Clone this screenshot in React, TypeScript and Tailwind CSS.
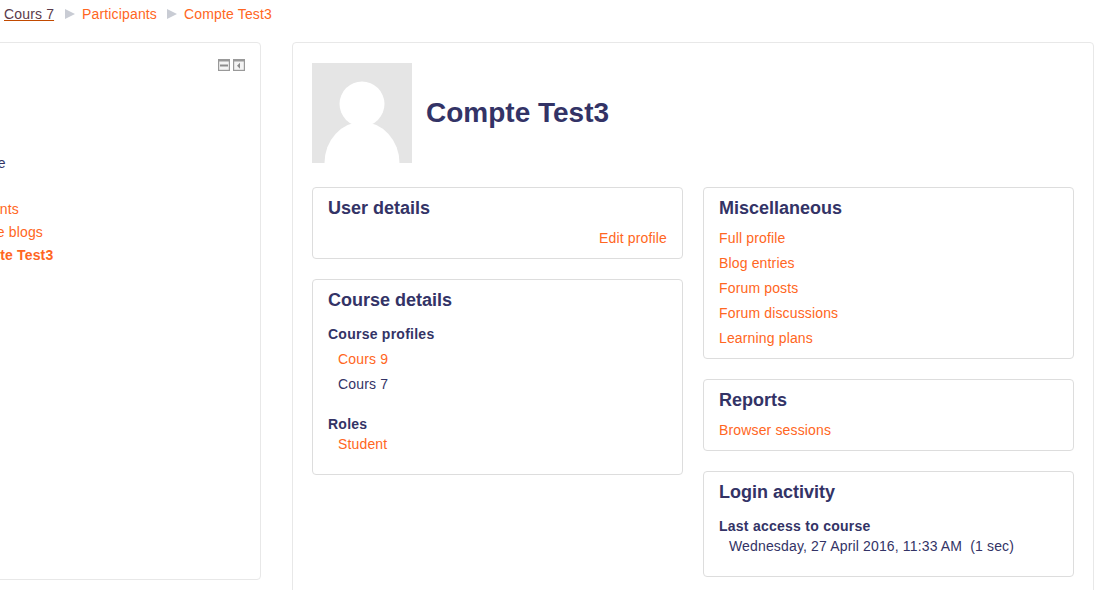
const ink = 'text-[#333366]';
const link = 'text-[#ff6622]';
const label = 'h-[20px] leading-[20px] font-bold tracking-[0.25px]';

function Card({ title, children }: { title: string; children: React.ReactNode }) {
    return (
        <section className="rounded-[4px] border border-[#ddd] px-[15px] pt-[9px] pb-[7px]">
            <h3 className="h-[22px] text-[18px] leading-[22px] font-bold tracking-normal">{title}</h3>
            <div className="mt-[7px] flow-root">{children}</div>
        </section>
    );
}

function LinkRow({ children }: { children: React.ReactNode }) {
    return <a className={`block h-[25px] leading-[25px] ${link}`}>{children}</a>;
}

function Separator({ left }: { left: string }) {
    return (
        <svg width="10" height="10" viewBox="0 0 10 10" className={`mr-[7px] shrink-0 ${left}`}>
            <path d="M0 0 L10 5 L0 10 Z" fill="#c9ccd4" />
        </svg>
    );
}

function WindowIcons() {
    return (
        <div className="flex justify-end gap-[3px] pr-[15px]">
            <svg width="12" height="12" viewBox="0 0 12 12">
                <rect x="0.6" y="0.6" width="10.8" height="10.8" fill="#f4f4f4" stroke="#999" strokeWidth="1.2" />
                <rect x="0" y="0" width="12" height="2.5" fill="#999" />
                <rect x="2" y="5.5" width="8" height="2" fill="#8c8c8c" />
            </svg>
            <svg width="12" height="12" viewBox="0 0 12 12">
                <rect x="0.6" y="0.6" width="10.8" height="10.8" fill="#f4f4f4" stroke="#999" strokeWidth="1.2" />
                <rect x="0" y="0" width="12" height="2.5" fill="#999" />
                <path d="M7 3.8 L4 6.8 L7 9.8 Z" fill="#8c8c8c" />
            </svg>
        </div>
    );
}

function Sidebar() {
    return (
        <aside className="ml-[-60px] h-[538px] w-[321px] shrink-0 rounded-[4px] border border-[#e8e8e8] pt-[16px]">
            <WindowIcons />
            <ul className="mt-[81px] leading-[23px] whitespace-nowrap">
                <li className="pl-[24px]">Profile</li>
                <li className="pl-[4px]">Cours 7</li>
                <li className={`pl-[3px] ${link}`}>Participants</li>
                <li className={`pl-[39px] ${link}`}>Site blogs</li>
                <li className={`pl-[19px] font-bold ${link}`}>Compte Test3</li>
            </ul>
        </aside>
    );
}

export default function App() {
    return (
        <div className={`h-[590px] w-[1110px] overflow-hidden bg-white font-['Liberation_Sans',Arial,sans-serif] text-[14px] tracking-[0.15px] ${ink}`}>
            <nav className="flex h-[28px] items-center whitespace-nowrap pl-[4px]">
                <a className="text-[#5b3a4a] underline decoration-[#c24a00]">Cours 7</a>
                <Separator left="ml-[11px]" />
                <a className={link}>Participants</a>
                <Separator left="ml-[10px]" />
                <a className={link}>Compte Test3</a>
            </nav>

            <div className="mt-[14px] flex gap-[31px]">
                <Sidebar />

                <main className="h-[600px] w-[802px] shrink-0 rounded-[4px] border border-[#e8e8e8] px-[19px] pt-[20px]">
                    <header className="flex h-[100px] items-center gap-[14px]">
                        <svg width="100" height="100" viewBox="0 0 100 100" className="shrink-0">
                            <rect width="100" height="100" fill="#e5e5e5" />
                            <ellipse cx="50" cy="100" rx="37.5" ry="41" fill="#fff" />
                            <circle cx="50" cy="41" r="22.5" fill="#fff" />
                        </svg>
                        <h1 className="text-[28px] font-bold tracking-normal">Compte Test3</h1>
                    </header>

                    <div className="mt-[24px] grid grid-cols-2 items-start gap-x-[20px]">
                        <div className="flex flex-col gap-[20px]">
                            <Card title="User details">
                                <a className={`block h-[25px] text-right leading-[25px] ${link}`}>Edit profile</a>
                            </Card>
                            <Card title="Course details">
                                <div className={`mt-[6px] ${label}`}>Course profiles</div>
                                <div className="mt-[3px] pl-[10px]">
                                    <LinkRow>Cours 9</LinkRow>
                                    <div className="h-[25px] leading-[25px]">Cours 7</div>
                                </div>
                                <div className={`mt-[17px] ${label}`}>Roles</div>
                                <a className={`block h-[20px] pl-[10px] leading-[20px] ${link}`}>Student</a>
                                <div className="h-[13px]" />
                            </Card>
                        </div>

                        <div className="flex flex-col gap-[20px]">
                            <Card title="Miscellaneous">
                                <LinkRow>Full profile</LinkRow>
                                <LinkRow>Blog entries</LinkRow>
                                <LinkRow>Forum posts</LinkRow>
                                <LinkRow>Forum discussions</LinkRow>
                                <LinkRow>Learning plans</LinkRow>
                            </Card>
                            <Card title="Reports">
                                <LinkRow>Browser sessions</LinkRow>
                            </Card>
                            <Card title="Login activity">
                                <div className={`mt-[6px] ${label}`}>Last access to course</div>
                                <div className="h-[20px] pl-[10px] leading-[20px] whitespace-pre">Wednesday, 27 April 2016, 11:33 AM  (1 sec)</div>
                                <div className="h-[13px]" />
                            </Card>
                        </div>
                    </div>
                </main>
            </div>
        </div>
    );
}
